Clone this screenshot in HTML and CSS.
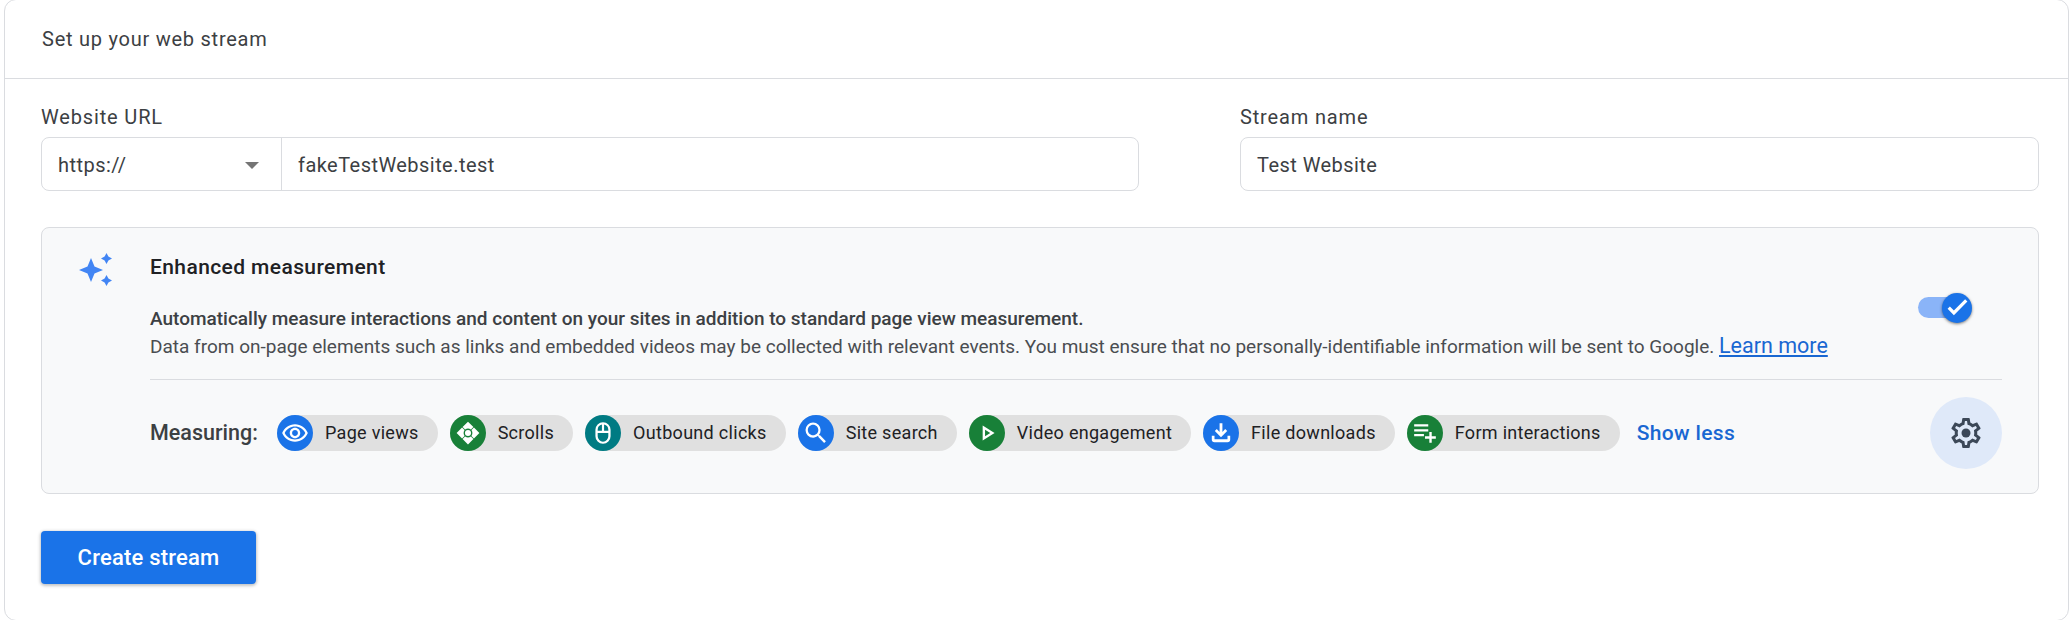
FILE: index.html
```html
<!DOCTYPE html>
<html lang="en">

<head>
    <meta charset="UTF-8">
    <title>Set up your web stream</title>
    <link rel="stylesheet" href="styles.css">
</head>

<body>
    <div class="card">
        <div class="card-head">Set up your web stream</div>
        <div class="card-body">
            <div class="fields">
                <div class="field field-url">
                    <div class="label">Website URL</div>
                    <div class="input">
                        <div class="protocol">https://<span class="arrow"></span></div>
                        <div class="value">fakeTestWebsite.test</div>
                    </div>
                </div>
                <div class="field field-name">
                    <div class="label">Stream name</div>
                    <div class="input">
                        <div class="value">Test Website</div>
                    </div>
                </div>
            </div>

            <div class="panel">
                <svg class="spark" viewBox="0 0 36 36">
                    <path d="M13 6l3.500 8.500L25 18l-8.500 3.500L13 30l-3.500-8.500L1 18l8.500-3.500z" />
                    <path d="M28.500 1l1.900 3.600 3.600 1.900-3.600 1.900-1.900 3.600-1.900-3.600L23 6.500l3.600-1.900z" />
                    <path d="M28.500 23l1.900 3.600 3.600 1.900-3.600 1.900-1.900 3.600-1.900-3.600-3.600-1.900 3.600-1.900z" />
                </svg>
                <div class="panel-main">
                    <div class="panel-top">
                        <div class="panel-text">
                            <div class="panel-title">Enhanced measurement</div>
                            <div class="panel-bold">Automatically measure interactions and content on your sites in addition to standard page view measurement.</div>
                            <div class="panel-desc">Data from on-page elements such as links and embedded videos may be collected with relevant events. You must ensure that no personally-identifiable information will be sent to Google. <a class="learn" href="#">Learn more</a></div>
                        </div>
                        <div class="toggle">
                            <div class="track"></div>
                            <div class="thumb">
                                <svg viewBox="0 0 24 24"><path d="M9 17.500L3.800 12.300l1.900-1.900L9 13.700l9.300-9.300 1.900 1.900z" /></svg>
                            </div>
                        </div>
                    </div>
                    <div class="panel-bottom">
                        <span class="measuring">Measuring:</span>
                        <div class="chips">
                            <div class="chip">
                                <span class="dot blue big"><svg viewBox="0 0 24 24"><path d="M12 6.500c3.790 0 7.170 2.130 8.820 5.500-1.650 3.370-5.020 5.500-8.820 5.500S4.830 15.370 3.180 12C4.830 8.630 8.210 6.500 12 6.500m0-2C7 4.500 2.730 7.610 1 12c1.730 4.390 6 7.500 11 7.500s9.270-3.110 11-7.500c-1.730-4.390-6-7.500-11-7.500zm0 5c1.380 0 2.500 1.120 2.500 2.500s-1.120 2.500-2.500 2.500-2.500-1.120-2.500-2.500 1.120-2.500 2.500-2.500m0-2c-2.480 0-4.500 2.020-4.500 4.500s2.020 4.500 4.500 4.500 4.500-2.020 4.500-4.500-2.020-4.500-4.500-4.500z" /></svg></span>
                                Page views
                            </div>
                            <div class="chip">
                                <span class="dot green"><svg viewBox="0 0 24 24"><path d="M12 1.500L7 6.500l2.300 2.300a5 5 0 0 1 5.400 0L17 6.500zM1.500 12l5 5 2.300-2.300a5 5 0 0 1 0-5.400L6.500 7zM22.500 12l-5-5-2.300 2.300a5 5 0 0 1 0 5.400l2.300 2.300zM12 22.500l5-5-2.300-2.300a5 5 0 0 1-5.400 0L7 17.500z" /><circle cx="12" cy="12" r="2.800" /></svg></span>
                                Scrolls
                            </div>
                            <div class="chip">
                                <span class="dot teal"><svg viewBox="0 0 24 24"><path d="M12 2a7 7 0 0 0-7 7v6a7 7 0 0 0 14 0V9a7 7 0 0 0-7-7zm-1 2.200V10H7.100V9A5 5 0 0 1 11 4.200zm2 0A5 5 0 0 1 16.900 9v1H13zM12 20a5 5 0 0 1-4.900-5v-3h9.800v3A5 5 0 0 1 12 20z" /></svg></span>
                                Outbound clicks
                            </div>
                            <div class="chip">
                                <span class="dot blue big"><svg viewBox="0 0 24 24"><path d="M15.500 14h-.790l-.280-.270A6.470 6.470 0 0 0 16 9.500 6.500 6.500 0 1 0 9.500 16c1.610 0 3.090-.590 4.230-1.570l.270.280v.790l5 4.990L20.490 19l-4.990-5zm-6 0C7.010 14 5 11.990 5 9.500S7.010 5 9.500 5 14 7.010 14 9.500 11.990 14 9.500 14z" /></svg></span>
                                Site search
                            </div>
                            <div class="chip">
                                <span class="dot green"><svg viewBox="0 0 24 24"><path d="M8 5v14l11-7zm2.200 4L15 12l-4.800 3z" /></svg></span>
                                Video engagement
                            </div>
                            <div class="chip">
                                <span class="dot blue"><svg viewBox="0 0 24 24"><path d="M10.700 3h2.600v8l2.600-2.600 1.800 1.800L12 16l-5.700-5.800 1.800-1.800 2.600 2.600zM3.500 14.500h2.500v3.300h12v-3.300h2.500V18a2.500 2.500 0 0 1-2.500 2.500H6A2.500 2.500 0 0 1 3.500 18z" /></svg></span>
                                File downloads
                            </div>
                            <div class="chip">
                                <span class="dot green"><svg viewBox="0 0 24 24"><path d="M2 4h13v2H2zM2 8.500h13v2H2zM2 13h9v2H2zM16 11h2.200v4H22v2.200h-3.800V21H16v-3.800h-4V15h4z" /></svg></span>
                                Form interactions
                            </div>
                            <a class="show-less" href="#">Show less</a>
                        </div>
                        <div class="gear">
                            <svg viewBox="0 0 24 24"><path d="M19.430 12.980c.040-.320.070-.640.070-.980s-.030-.660-.070-.980l2.110-1.650c.190-.150.240-.420.120-.640l-2-3.460c-.120-.220-.390-.300-.610-.220l-2.490 1c-.520-.400-1.080-.730-1.690-.980l-.380-2.650A.488.488 0 0 0 14 2h-4c-.250 0-.460.180-.490.420l-.380 2.650c-.610.250-1.170.590-1.690.980l-2.490-1c-.230-.090-.490 0-.610.220l-2 3.460c-.130.220-.070.490.120.640l2.110 1.650c-.040.320-.070.650-.070.980s.030.660.070.980l-2.110 1.650c-.190.150-.240.420-.120.640l2 3.460c.120.220.390.300.610.220l2.490-1c.520.400 1.080.730 1.690.980l.380 2.650c.030.240.240.420.490.420h4c.250 0 .460-.180.490-.420l.380-2.650c.610-.250 1.170-.590 1.690-.980l2.490 1c.230.090.490 0 .610-.220l2-3.460c.120-.220.070-.490-.120-.640l-2.110-1.650zm-1.980-1.710c.040.310.050.520.050.730 0 .210-.020.430-.050.730l-.140 1.130.890.700 1.080.840-.700 1.210-1.270-.510-1.040-.420-.900.680c-.430.320-.840.560-1.250.730l-1.060.430-.160 1.130-.200 1.350h-1.400l-.190-1.350-.160-1.130-1.060-.430c-.430-.180-.830-.410-1.230-.710l-.910-.700-1.060.430-1.270.510-.700-1.210 1.080-.840.890-.700-.140-1.130c-.030-.310-.050-.540-.050-.740s.020-.430.050-.730l.140-1.130-.890-.700-1.080-.840.700-1.210 1.270.510 1.040.420.900-.680c.430-.320.840-.560 1.250-.730l1.060-.430.160-1.130.200-1.350h1.390l.190 1.350.160 1.130 1.060.430c.430.180.830.410 1.230.710l.910.700 1.060-.430 1.270-.510.700 1.210-1.070.850-.890.700.140 1.130z" /><circle cx="12" cy="12" r="3" /></svg>
                        </div>
                    </div>
                </div>
            </div>

            <button class="create">Create stream</button>
        </div>
    </div>
</body>

</html>
```
FILE: styles.css
```css
* {
    margin: 0;
    padding: 0;
    box-sizing: border-box;
}

html,
body {
    width: 100%;
    height: 100%;
    background: #fff;
    overflow: hidden;
}

body {
    font-family: Roboto, sans-serif;
    color: #202124;
    padding-left: 4px;
}

.card {
    width: 2065px;
    height: 622px;
    margin-top: -1px;
    border: 1px solid #dadce0;
    border-radius: 12px;
    background: #fff;
}

.card-head {
    height: 79px;
    padding-left: 37px;
    line-height: 78px;
    font-size: 20px;
    letter-spacing: .75px;
    color: #3c4043;
    border-bottom: 1px solid #dadce0;
}

.card-body {
    padding: 26px 0 0 36px;
    width: 2034px;
}

.fields {
    display: flex;
    gap: 101px;
}

.field-url {
    width: 1098px;
}

.field-name {
    width: 799px;
}

.label {
    height: 32px;
    line-height: 24px;
    font-size: 20px;
    letter-spacing: .85px;
    color: #3c4043;
}

.input {
    display: flex;
    height: 54px;
    border: 1px solid #dadce0;
    border-radius: 8px;
    font-size: 20px;
    letter-spacing: .45px;
    line-height: 55px;
    color: #3c4043;
}

.protocol {
    position: relative;
    width: 240px;
    padding-left: 16px;
    border-right: 1px solid #dadce0;
}

.arrow {
    position: absolute;
    right: 22px;
    top: 24px;
    border: 7px solid transparent;
    border-top-color: #757575;
    border-bottom: 0;
}

.value {
    padding-left: 16px;
}

.panel {
    display: flex;
    height: 267px;
    margin-top: 36px;
    padding: 22px 36px 0 36px;
    background: #f8f9fa;
    border: 1px solid #dadce0;
    border-radius: 8px;
}

.spark {
    width: 36px;
    height: 36px;
    margin-top: 2px;
    fill: #4285f4;
    flex-shrink: 0;
}

.panel-main {
    flex: 1;
    margin-left: 36px;
}

.panel-top {
    display: flex;
    justify-content: space-between;
    height: 130px;
    border-bottom: 1px solid #dadce0;
}

.panel-title {
    font-size: 21px;
    font-weight: 500;
    letter-spacing: .4px;
    line-height: 34px;
    color: #202124;
}

.panel-bold {
    margin-top: 21px;
    font-size: 19px;
    font-weight: 500;
    line-height: 27px;
    color: #3c4043;
}

.panel-desc {
    font-size: 19px;
    line-height: 27px;
    color: #4a4d51;
}

.learn {
    font-size: 21.500px;
    color: #1967d2;
}

.toggle {
    position: relative;
    width: 54px;
    height: 30px;
    margin: 43px 30px 0 0;
}

.track {
    width: 45px;
    height: 21px;
    margin-top: 4px;
    border-radius: 11px;
    background: #8ab4f8;
}

.thumb {
    position: absolute;
    right: 0;
    top: 0;
    width: 30px;
    height: 30px;
    border-radius: 50%;
    background: #1a73e8;
    box-shadow: 0 1px 3px rgba(0, 0, 0, .5);
    fill: #fff;
    display: flex;
    align-items: center;
    justify-content: center;
}

.thumb svg {
    width: 29px;
    height: 29px;
}

.panel-bottom {
    display: flex;
    align-items: center;
    height: 105px;
}

.measuring {
    width: 127px;
    font-size: 21.500px;
    font-weight: 500;
    color: #3c4043;
    flex-shrink: 0;
}

.chips {
    display: flex;
    align-items: center;
    gap: 12px;
    flex: 1;
}

.chip {
    display: flex;
    align-items: center;
    height: 36px;
    padding-right: 19px;
    border-radius: 18px;
    background: #e0e0e0;
    font-size: 18px;
    letter-spacing: .3px;
    color: #202124;
    white-space: nowrap;
}

.dot {
    display: flex;
    align-items: center;
    justify-content: center;
    width: 36px;
    height: 36px;
    margin-right: 12px;
    border-radius: 50%;
    fill: #fff;
    flex-shrink: 0;
}

.dot svg {
    width: 26px;
    height: 26px;
}

.dot.big svg {
    width: 28px;
    height: 28px;
}

.blue {
    background: #1a73e8;
}

.green {
    background: #188038;
}

.teal {
    background: #007b83;
}

.show-less {
    margin-left: 5px;
    font-size: 21px;
    font-weight: 500;
    letter-spacing: .35px;
    color: #1967d2;
    text-decoration: none;
}

.gear {
    display: flex;
    align-items: center;
    justify-content: center;
    width: 72px;
    height: 72px;
    border-radius: 50%;
    background: #dfe9f9;
    fill: #3c4858;
}

.gear svg {
    width: 36px;
    height: 36px;
}

.create {
    display: block;
    width: 215px;
    height: 53px;
    margin-top: 37px;
    border: 0;
    border-radius: 4px;
    background: #1a73e8;
    box-shadow: 0 1px 3px 1px rgba(60, 64, 67, .3);
    font-family: Roboto, sans-serif;
    font-size: 22px;
    font-weight: 500;
    letter-spacing: .2px;
    color: #fff;
}
```
